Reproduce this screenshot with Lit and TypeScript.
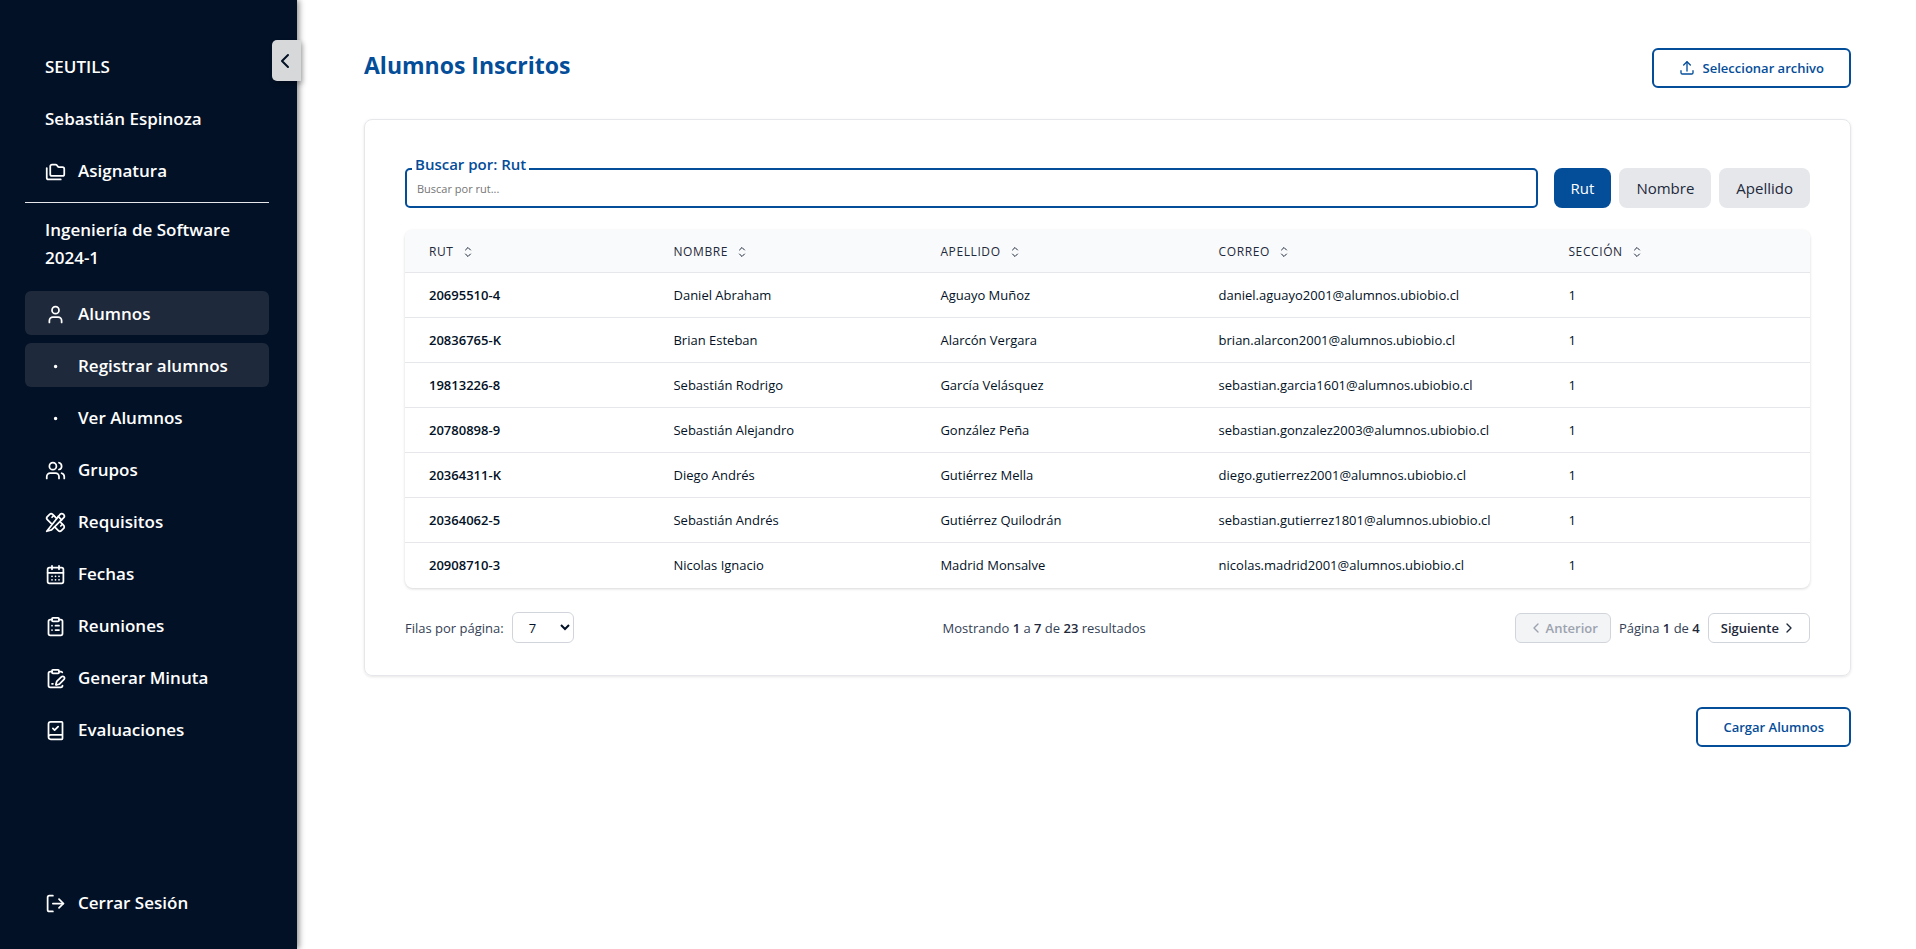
import { LitElement, html, css, svg } from "lit";
import { customElement, property, state } from "lit/decorators.js";
import { classMap } from "lit/directives/class-map.js";

const ICONS: Record<string, unknown> = {
  folders: svg`<path d="M20 17a2 2 0 0 0 2-2V9a2 2 0 0 0-2-2h-3.9a2 2 0 0 1-1.69-.9l-.81-1.2a2 2 0 0 0-1.67-.9H8a2 2 0 0 0-2 2v9a2 2 0 0 0 2 2Z"/><path d="M2 8v11a2 2 0 0 0 2 2h14"/>`,
  user: svg`<path d="M19 21v-2a4 4 0 0 0-4-4H9a4 4 0 0 0-4 4v2"/><circle cx="12" cy="7" r="4"/>`,
  users: svg`<path d="M16 21v-2a4 4 0 0 0-4-4H6a4 4 0 0 0-4 4v2"/><circle cx="9" cy="7" r="4"/><path d="M22 21v-2a4 4 0 0 0-3-3.87"/><path d="M16 3.13a4 4 0 0 1 0 7.75"/>`,
  dot: svg`<circle cx="12.1" cy="12.1" r="1"/>`,
  pencilRuler: svg`<path d="m15 5 4 4"/><path d="M13 7 8.7 2.7a2.41 2.41 0 0 0-3.4 0L2.7 5.3a2.41 2.41 0 0 0 0 3.4L7 13"/><path d="m8 6 2-2"/><path d="m2 22 5.5-1.5L21.17 6.83a2.82 2.82 0 0 0-4-4Z"/><path d="m18 16 2-2"/><path d="m17 11 4.3 4.3c.94.94.94 2.46 0 3.4l-2.6 2.6c-.94.94-2.46.94-3.4 0L11 17"/>`,
  calendar: svg`<path d="M8 2v4M16 2v4"/><rect width="18" height="18" x="3" y="4" rx="2"/><path d="M3 10h18M8 14h.01M12 14h.01M16 14h.01M8 18h.01M12 18h.01M16 18h.01"/>`,
  clipboardList: svg`<rect width="8" height="4" x="8" y="2" rx="1"/><path d="M16 4h2a2 2 0 0 1 2 2v14a2 2 0 0 1-2 2H6a2 2 0 0 1-2-2V6a2 2 0 0 1 2-2h2"/><path d="M12 11h4M12 16h4M8 11h.01M8 16h.01"/>`,
  clipboardPen: svg`<rect width="8" height="4" x="8" y="2" rx="1"/><path d="M21.34 15.664a1 1 0 1 0-3.004-3.004l-5.01 5.012a2 2 0 0 0-.506.854l-.837 2.87a.5.5 0 0 0 .62.62l2.87-.837a2 2 0 0 0 .854-.506z" transform="translate(0.4 -2.6)"/><path d="M16 4h2a2 2 0 0 1 1.73 1"/><path d="M8 4H6a2 2 0 0 0-2 2v14a2 2 0 0 0 2 2h12a2 2 0 0 0 2-2"/><path d="M8 18h1"/>`,
  bookCheck: svg`<path d="M4 19.5v-15A2.5 2.5 0 0 1 6.5 2H19a1 1 0 0 1 1 1v18a1 1 0 0 1-1 1H6.500a1 1 0 0 1 0-5H20"/><path d="m9 9.500 2 2 4-4"/>`,
  logout: svg`<path d="M9 21H5a2 2 0 0 1-2-2V5a2 2 0 0 1 2-2h4"/><path d="m16 17 5-5-5-5"/><path d="M21 12H9"/>`,
  upload: svg`<path d="M3 16v3a2 2 0 0 0 2 2h14a2 2 0 0 0 2-2v-3"/><path d="m7 7.500 5-5 5 5"/><path d="M12 3v13.500"/>`,
  left: svg`<path d="m15 18-6-6 6-6"/>`,
  right: svg`<path d="m9 18 6-6-6-6"/>`,
  sort: svg`<path d="m7 8 5-5 5 5"/><path d="m7 16 5 5 5-5"/>`,
};

@customElement("ui-icon")
class UiIcon extends LitElement {
  static styles = css`
    :host { display: inline-flex; flex: none; width: 20px; height: 20px; }
    svg { width: 100%; height: 100%; fill: none; stroke: currentColor; stroke-width: 2; stroke-linecap: round; stroke-linejoin: round; }
  `;
  @property() name = "";
  render() {
    return html`<svg viewBox="0 0 24 24" aria-hidden="true">${ICONS[this.name]}</svg>`;
  }
}

@customElement("app-sidebar")
class AppSidebar extends LitElement {
  static styles = css`
    :host { display: block; flex: none; position: relative; width: 297px; box-sizing: border-box; background: #021126; box-shadow: 2px 0 6px rgba(0, 0, 0, 0.45); color: #fff; }
    .inner { box-sizing: border-box; height: 100%; display: flex; flex-direction: column; padding: 44px 28px 25px 25px; font-size: 17px; font-weight: 600; line-height: 28px; }
    .list { display: flex; flex-direction: column; gap: 8px; margin: 0; padding: 0; list-style: none; }
    .item { display: flex; align-items: center; gap: 12px; box-sizing: border-box; height: 44px; padding: 2px 20px 0; border-radius: 6px; color: inherit; text-decoration: none; white-space: nowrap; }
    .item ui-icon { width: 21px; height: 21px; }
    .item.active { background: #1e293b; }
    .rule { width: 100%; margin: 10px 0 13px; border: 0; border-top: 1px solid #e5e7eb; }
    .course { margin: 0 0 19px; padding: 0 20px; }
    .logout { margin-top: auto; }
    .collapse { position: absolute; top: 40px; right: -4px; display: flex; align-items: center; justify-content: center; width: 29px; height: 41px; padding: 0 4px 0 0; border: 0; border-radius: 5px 0 0 5px; background: #d6d8da; color: #021126; box-shadow: 2px 3px 5px rgba(0, 0, 0, 0.25); }
    .collapse ui-icon { width: 24px; height: 24px; }
  `;
  private links = [
    ["user", "Alumnos", true], ["dot", "Registrar alumnos", true], ["dot", "Ver Alumnos", false],
    ["users", "Grupos", false], ["pencilRuler", "Requisitos", false], ["calendar", "Fechas", false],
    ["clipboardList", "Reuniones", false], ["clipboardPen", "Generar Minuta", false], ["bookCheck", "Evaluaciones", false],
  ] as const;
  private link(icon: string, text: string, active = false) {
    return html`<a href="#" class=${classMap({ item: true, active })}><ui-icon name=${icon}></ui-icon>${text}</a>`;
  }
  render() {
    return html`
      <div class="inner">
        <div class="list">
          <div class="item">SEUTILS</div>
          <div class="item">Sebastián Espinoza</div>
          ${this.link("folders", "Asignatura")}
        </div>
        <hr class="rule" />
        <p class="course">Ingeniería de Software 2024-1</p>
        <nav><ul class="list">${this.links.map(([i, t, a]) => html`<li>${this.link(i, t, a)}</li>`)}</ul></nav>
        <div class="logout">${this.link("logout", "Cerrar Sesión")}</div>
      </div>
      <button class="collapse" aria-label="Contraer menú"><ui-icon name="left"></ui-icon></button>
    `;
  }
}

const STUDENTS = [
  ["20695510-4", "Daniel Abraham", "Aguayo Muñoz", "daniel.aguayo2001@alumnos.ubiobio.cl", "1"],
  ["20836765-K", "Brian Esteban", "Alarcón Vergara", "brian.alarcon2001@alumnos.ubiobio.cl", "1"],
  ["19813226-8", "Sebastián Rodrigo", "García Velásquez", "sebastian.garcia1601@alumnos.ubiobio.cl", "1"],
  ["20780898-9", "Sebastián Alejandro", "González Peña", "sebastian.gonzalez2003@alumnos.ubiobio.cl", "1"],
  ["20364311-K", "Diego Andrés", "Gutiérrez Mella", "diego.gutierrez2001@alumnos.ubiobio.cl", "1"],
  ["20364062-5", "Sebastián Andrés", "Gutiérrez Quilodrán", "sebastian.gutierrez1801@alumnos.ubiobio.cl", "1"],
  ["20908710-3", "Nicolas Ignacio", "Madrid Monsalve", "nicolas.madrid2001@alumnos.ubiobio.cl", "1"],
];

@customElement("student-table")
class StudentTable extends LitElement {
  static styles = css`
    :host { display: block; border-radius: 8px; overflow: hidden; background: #fff; box-shadow: 0 1px 3px rgba(0, 0, 0, 0.16); }
    table { width: 100%; table-layout: fixed; border-collapse: separate; border-spacing: 0; font-size: 13px; line-height: 20px; color: #021126; }
    .c-rut { width: 17.4%; }
    .c-name { width: 19%; }
    .c-last { width: 19.8%; }
    .c-mail { width: 24.9%; }
    th, td { box-sizing: border-box; padding: 12px 24px; text-align: left; white-space: nowrap; border-bottom: 1px solid #e5e7eb; }
    thead th { height: 43px; padding: 2px 24px 0; background: #f9fafb; font-size: 12px; font-weight: 500; letter-spacing: 0.6px; color: #1e293b; }
    tbody th { font-weight: 600; }
    tbody tr:last-child > * { border-bottom-color: transparent; }
    .sort { display: flex; align-items: center; gap: 8px; padding: 0; border: 0; background: none; font: inherit; letter-spacing: inherit; color: inherit; }
    .sort ui-icon { width: 12px; height: 12px; }
  `;
  render() {
    return html`
      <table>
        <colgroup><col class="c-rut" /><col class="c-name" /><col class="c-last" /><col class="c-mail" /><col /></colgroup>
        <thead><tr>
          ${["RUT", "NOMBRE", "APELLIDO", "CORREO", "SECCIÓN"].map((h) => html`<th scope="col"><button class="sort">${h}<ui-icon name="sort"></ui-icon></button></th>`)}
        </tr></thead>
        <tbody>
          ${STUDENTS.map(([rut, ...rest]) => html`<tr><th scope="row">${rut}</th>${rest.map((v) => html`<td>${v}</td>`)}</tr>`)}
        </tbody>
      </table>
    `;
  }
}

@customElement("app-root")
class AppRoot extends LitElement {
  static styles = css`
    :host { display: flex; min-height: 100vh; background: #fff; color: #021126; font-family: "Segoe UI", "Open Sans", "Noto Sans", sans-serif; font-size: 13px; line-height: 20px; }
    button, input, select { font: inherit; }
    main { flex: 1; min-width: 0; padding: 48px 65px 48px 67px; }
    .head { display: flex; align-items: flex-start; justify-content: space-between; }
    h1 { margin: 0; font-size: 23px; line-height: 34px; font-weight: 700; color: #044d99; }
    .outline { display: flex; align-items: center; gap: 8px; box-sizing: border-box; height: 40px; padding: 0 25px; border: 2px solid #044d99; border-radius: 6px; background: #fff; font-weight: 600; color: #044d99; }
    .outline ui-icon { width: 16px; height: 16px; }
    .card { margin: 31px 0; padding: 48px 40px 32px; border: 1px solid #e5e7eb; border-radius: 8px; box-shadow: 0 1px 3px rgba(0, 0, 0, 0.1); }
    .search { display: flex; gap: 16px; margin-bottom: 22px; }
    .field { position: relative; flex: 1; }
    .field label { position: absolute; top: -14px; left: 7px; padding: 0 3px; background: #fff; font-size: 15px; font-weight: 600; color: #044d99; }
    .field input { display: block; box-sizing: border-box; width: 100%; height: 40px; padding: 0 10px; border: 2px solid #044d99; border-radius: 5px; outline: 0; background: #fff; font-size: 11px; color: #021126; }
    .field input::placeholder { color: #757575; opacity: 1; }
    .tabs { display: flex; gap: 8px; }
    .tab { height: 40px; padding: 0 17px; border: 0; border-radius: 8px; background: #e5e7eb; font-size: 15px; color: #1e293b; }
    .tab.on { background: #044d99; color: #fff; }
    .foot { display: flex; align-items: center; justify-content: space-between; margin-top: 24px; color: #334155; }
    .group { display: flex; align-items: center; gap: 8px; }
    strong { font-weight: 600; color: #1e293b; }
    select { width: 62px; height: 31px; padding: 0 0 0 12px; border: 1px solid #d1d5db; border-radius: 6px; background: #fff; color: #021126; }
    .page { display: flex; align-items: center; gap: 2px; height: 30px; padding: 0 12px; border: 1px solid #d1d5db; border-radius: 6px; background: #fff; font-weight: 600; color: #1e293b; }
    .page ui-icon { width: 16px; height: 16px; }
    .page:disabled { background: #f3f4f6; color: #9ca3af; }
    .actions { display: flex; justify-content: flex-end; }
  `;
  @state() private by = "Rut";
  render() {
    return html`
      <app-sidebar></app-sidebar>
      <main>
        <header class="head">
          <h1>Alumnos Inscritos</h1>
          <button class="outline"><ui-icon name="upload"></ui-icon>Seleccionar archivo</button>
        </header>
        <section class="card">
          <div class="search">
            <div class="field">
              <input id="search" type="text" placeholder="Buscar por ${this.by.toLowerCase()}..." />
              <label for="search">Buscar por: ${this.by}</label>
            </div>
            <div class="tabs">
              ${["Rut", "Nombre", "Apellido"].map((t) => html`<button class=${classMap({ tab: true, on: t === this.by })} @click=${() => (this.by = t)}>${t}</button>`)}
            </div>
          </div>
          <student-table></student-table>
          <div class="foot">
            <div class="group"><label for="rows">Filas por página:</label><select id="rows"><option>7</option><option>10</option><option>20</option></select></div>
            <div>Mostrando <strong>1</strong> a <strong>7</strong> de <strong>23</strong> resultados</div>
            <div class="group">
              <button class="page" disabled><ui-icon name="left"></ui-icon>Anterior</button>
              <span>Página <strong>1</strong> de <strong>4</strong></span>
              <button class="page">Siguiente<ui-icon name="right"></ui-icon></button>
            </div>
          </div>
        </section>
        <div class="actions"><button class="outline">Cargar Alumnos</button></div>
      </main>
    `;
  }
}
